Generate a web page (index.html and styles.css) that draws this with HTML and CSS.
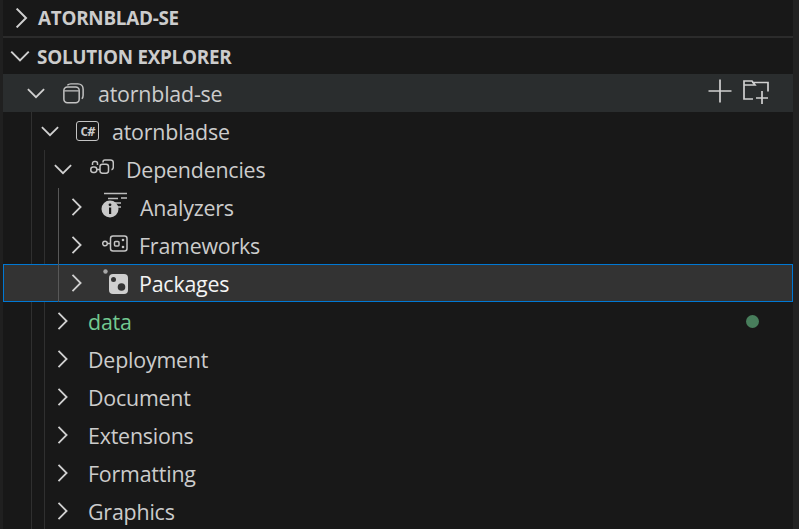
FILE: index.html
```html
<!DOCTYPE html>
<html lang="en">
<head>
<meta charset="utf-8">
<title>Solution Explorer</title>
<link rel="stylesheet" href="styles.css">
</head>
<body>
<div class="sidebar">
  <div class="section closed">
    <svg class="chev" viewBox="0 0 16 16"><path d="M4.500 .5 12 8 4.500 15.500"/></svg>
    <span class="section-title">ATORNBLAD-SE</span>
  </div>
  <div class="section">
    <svg class="chev" viewBox="0 0 16 16"><path d="M1 4.500 8 11.500 15 4.500"/></svg>
    <span class="section-title">SOLUTION EXPLORER</span>
  </div>
  <div class="tree">
    <span class="guide g1"></span>
    <span class="guide g2"></span>
    <span class="guide g3"></span>
    <div class="row active d0">
      <svg class="chev" viewBox="0 0 16 16"><path d="M.8 4.500 8 11.700 15.200 4.500"/></svg>
      <svg class="icon i-sln" viewBox="0 0 24 24"><rect x="1" y="4.500" width="17.500" height="18" rx="4"/><path d="M1.500 9H18M5 2.500C6 1.500 7 1 9 1h8c3.500 0 6 2.500 6 6v7c0 2-.5 3-1.500 4"/></svg>
      <span class="label">atornblad-se</span>
      <span class="actions">
        <svg class="act-plus" viewBox="0 0 24 24"><path d="M12 .5v23M.5 12h23"/></svg>
        <svg class="act-folder" viewBox="0 0 28 26"><path d="M11 20H2V2h8l3 4H1.500M10 3.500h16v9"/><path d="M20 12v13M14 19h12"/></svg>
      </span>
    </div>
    <div class="row d1">
      <svg class="chev" viewBox="0 0 16 16"><path d="M.8 4.500 8 11.700 15.200 4.500"/></svg>
      <span class="icon i-cs"><span class="cs-text">C#</span></span>
      <span class="label">atornbladse</span>
    </div>
    <div class="row d2">
      <svg class="chev" viewBox="0 0 16 16"><path d="M.8 4.500 8 11.700 15.200 4.500"/></svg>
      <svg class="icon i-dep" viewBox="0 0 24 15"><rect x=".8" y="8" width="6" height="5.500" rx="2.400"/><path d="M7 10.500h3"/><rect x="10" y="5.200" width="8.500" height="9" rx="2.400"/><path d="M2.500 6V4.500a2 2 0 0 1 2-2h1a2 2 0 0 1 2 2V6M13 3.500V3a2 2 0 0 1 2-2h5.500a2.800 2.800 0 0 1 2.800 2.800v4.500a2.500 2.500 0 0 1-1.800 2.400"/></svg>
      <span class="label">Dependencies</span>
    </div>
    <div class="row d3">
      <svg class="chev" viewBox="0 0 16 16"><path d="M4 .8 11.200 8 4 15.200"/></svg>
      <svg class="icon i-ana" viewBox="0 0 26 26"><path class="thin" d="M3 1.500h23M7 6.500h10M20 6h6M12 11h8M17 15h3"/><circle class="solid" cx="9" cy="17" r="8.500"/><rect class="cut" x="8" y="15.500" width="2.200" height="6.500"/><circle class="cut" cx="9" cy="12.800" r="1.400"/></svg>
      <span class="label">Analyzers</span>
    </div>
    <div class="row d3">
      <svg class="chev" viewBox="0 0 16 16"><path d="M4 .8 11.200 8 4 15.200"/></svg>
      <svg class="icon i-fw" viewBox="0 0 26 17"><circle cx="3" cy="8.500" r="2.300"/><path d="M5.500 8.500h3"/><rect x="8.500" y="1" width="16.500" height="15" rx="2.500"/><rect class="fill" x="12.500" y="6.500" width="4.500" height="4.500" rx="1"/><circle class="dot" cx="21" cy="5" r="1.300"/><circle class="dot" cx="21" cy="12" r="1.300"/></svg>
      <span class="label">Frameworks</span>
    </div>
    <div class="row d3 selected">
      <svg class="chev" viewBox="0 0 16 16"><path d="M4 .8 11.200 8 4 15.200"/></svg>
      <svg class="icon i-pkg" viewBox="0 0 25 25"><circle class="small" cx="2.500" cy="2.500" r="2.200"/><rect class="solid" x="6" y="5" width="19" height="20" rx="4"/><circle class="cut" cx="10.500" cy="10.500" r="2.500"/><circle class="cut" cx="18.500" cy="18" r="3.800"/></svg>
      <span class="label">Packages</span>
    </div>
    <div class="row d4 modified">
      <svg class="chev" viewBox="0 0 16 16"><path d="M4 .8 11.200 8 4 15.200"/></svg>
      <span class="label">data</span>
      <span class="badge"></span>
    </div>
    <div class="row d4">
      <svg class="chev" viewBox="0 0 16 16"><path d="M4 .8 11.200 8 4 15.200"/></svg>
      <span class="label">Deployment</span>
    </div>
    <div class="row d4">
      <svg class="chev" viewBox="0 0 16 16"><path d="M4 .8 11.200 8 4 15.200"/></svg>
      <span class="label">Document</span>
    </div>
    <div class="row d4">
      <svg class="chev" viewBox="0 0 16 16"><path d="M4 .8 11.200 8 4 15.200"/></svg>
      <span class="label">Extensions</span>
    </div>
    <div class="row d4">
      <svg class="chev" viewBox="0 0 16 16"><path d="M4 .8 11.200 8 4 15.200"/></svg>
      <span class="label">Formatting</span>
    </div>
    <div class="row d4">
      <svg class="chev" viewBox="0 0 16 16"><path d="M4 .8 11.200 8 4 15.200"/></svg>
      <span class="label">Graphics</span>
    </div>
  </div>
</div>
</body>
</html>
```
FILE: styles.css
```css
* { box-sizing: border-box; }
html, body { margin: 0; height: 100%; background: #181818; overflow: hidden; }
body { font-family: "Open Sans", "Noto Sans", sans-serif; color: #cccccc; }

.sidebar {
  width: 799px;
  height: 529px;
  overflow: hidden;
  border-left: 3px solid #202020;
  border-right: 6px solid #222222;
  background: #181818;
}

svg { display: block; flex: none; fill: none; stroke: #d0d0d0; stroke-width: 1.6; }

.section {
  height: 36px;
  display: flex;
  align-items: center;
  gap: 7px;
  padding-left: 7px;
}
.section.closed { height: 38px; border-bottom: 2px solid #2b2b2b; padding-left: 8px; gap: 7px; }
.section .chev { width: 20px; height: 20px; }
.section-title { font-size: 18.85px; font-weight: 700; color: #cccccc; line-height: 24px; letter-spacing: -0.25px; position: relative; top: 1px; }
.closed .section-title { top: 0; }

.tree { position: relative; }
.guide { position: absolute; width: 1px; background: #303030; top: 38px; bottom: 0; }
.g1 { left: 28px; }
.g2 { left: 41px; top: 76px; }
.g3 { left: 55px; top: 114px; height: 114px; bottom: auto; background: #585858; z-index: 2; }

.row {
  height: 38px;
  display: flex;
  align-items: center;
  position: relative;
  font-size: 21.4px;
  color: #cccccc;
}
.row .chev { width: 18px; height: 18px; flex: none; }
.d0 { padding-left: 24px; }
.d1 { padding-left: 38px; }
.d2 { padding-left: 51px; }
.d3 { padding-left: 65px; }
.d4 { padding-left: 51px; }
.d4 .chev { margin-right: 16px; }

.label { line-height: 38px; letter-spacing: -0.2px; position: relative; top: 1px; }
.active { background: #2a2d2e; }
.selected {
  background: #333333;
  border: 1px solid #0078d4;
  color: #f4f4f4;
  padding-left: 64px;
}
.modified { color: #73c991; }

.icon { flex: none; }
.i-sln { width: 21px; height: 21px; margin: 0 14px 0 18px; stroke-width: 1.700; stroke: #c4c4c4; }
.i-cs {
  width: 23px; height: 20px;
  margin: 0 13px 0 17px;
  border: 1.600px solid #c4c4c4;
  border-radius: 3px;
  display: flex;
  align-items: center;
  justify-content: center;
}
.cs-text { font-family: "DejaVu Sans Mono", monospace; font-weight: 700; font-size: 13px; line-height: 1; color: #c8c8c8; letter-spacing: -0.5px; }
.i-dep { width: 24px; height: 15px; margin: -6px 12px 0 18px; stroke-width: 1.500; stroke: #c4c4c4; }
.i-ana { width: 26px; height: 26px; margin: -4px 13px 0 15px; stroke-width: 1.500; }
.i-ana .thin { stroke: #bdbdbd; }
.i-ana .solid { fill: #c8c8c8; stroke: none; }
.i-ana .cut { fill: #181818; stroke: none; }
.i-fw { width: 26px; height: 17px; margin: -3px 11px 0 16px; stroke-width: 1.500; stroke: #c4c4c4; }
.i-fw .dot { fill: #c4c4c4; stroke: none; }
.i-pkg { width: 25px; height: 25px; margin: -3px 11px 0 17px; stroke: none; }
.i-pkg .small { fill: #a8a8a8; }
.i-pkg .solid { fill: #cfcfcf; }
.i-pkg .cut { fill: #333333; }

.actions { margin-left: auto; display: flex; align-items: center; gap: 10px; padding-right: 23px; margin-top: -4px; }
.act-plus { width: 24px; height: 24px; stroke-width: 1.700; }
.act-folder { width: 28px; height: 26px; stroke-width: 1.700; margin-top: 2px; }

.badge { position: absolute; left: 743px; top: 13px; width: 13px; height: 13px; border-radius: 50%; background: #487e5c; }
```
